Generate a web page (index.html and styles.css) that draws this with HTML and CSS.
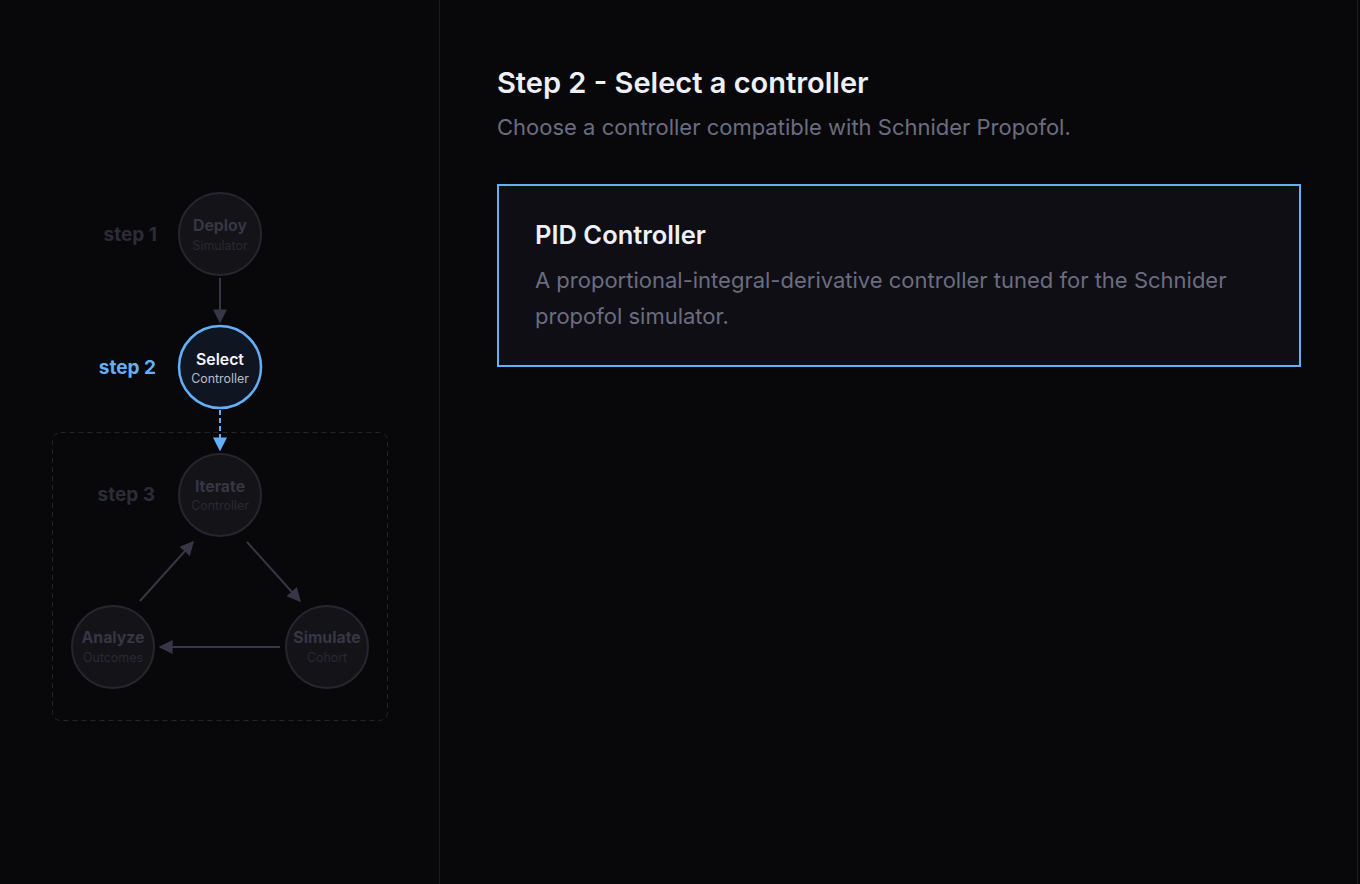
FILE: index.html
```html
<!DOCTYPE html>
<html lang="en">
<head>
    <meta charset="UTF-8">
    <title>Step 2 - Select a controller</title>
    <link rel="stylesheet" href="styles.css">
</head>
<body>
    <div class="app">
        <aside class="sidebar">
            <svg class="flow" width="440" height="884" viewBox="0 0 440 884">
                <defs>
                    <marker id="head" viewBox="0 0 10 10" refX="9" refY="5" markerWidth="7" markerHeight="7" orient="auto-start-reverse">
                        <path d="M0 0 L10 5 L0 10 z" fill="#363646"/>
                    </marker>
                    <marker id="head-blue" viewBox="0 0 10 10" refX="9" refY="5" markerWidth="7" markerHeight="7" orient="auto-start-reverse">
                        <path d="M0 0 L10 5 L0 10 z" fill="#64b0f8"/>
                    </marker>
                </defs>

                <!-- step 3 loop box -->
                <rect class="loop" x="52.5" y="432.5" width="335" height="288" rx="8"/>

                <!-- arrows -->
                <line class="edge" x1="220" y1="278" x2="220" y2="322" marker-end="url(#head)"/>
                <line class="edge edge-active" x1="220" y1="410" x2="220" y2="450" marker-end="url(#head-blue)"/>
                <line class="edge" x1="247" y1="542" x2="300" y2="601" marker-end="url(#head)"/>
                <line class="edge" x1="280" y1="647" x2="160" y2="647" marker-end="url(#head)"/>
                <line class="edge" x1="140" y1="601" x2="193" y2="542" marker-end="url(#head)"/>

                <!-- step labels -->
                <text class="step-label" x="157" y="241">step 1</text>
                <text class="step-label active" x="156" y="374">step 2</text>
                <text class="step-label" x="155" y="501">step 3</text>

                <!-- nodes -->
                <g class="node">
                    <circle cx="220" cy="234" r="41"/>
                    <text class="node-title" x="220" y="231">Deploy</text>
                    <text class="node-sub" x="220" y="250">Simulator</text>
                </g>
                <g class="node active">
                    <circle cx="220" cy="367" r="41"/>
                    <text class="node-title" x="220" y="365">Select</text>
                    <text class="node-sub" x="220" y="383">Controller</text>
                </g>
                <g class="node">
                    <circle cx="220" cy="495" r="41"/>
                    <text class="node-title" x="220" y="492">Iterate</text>
                    <text class="node-sub" x="220" y="510">Controller</text>
                </g>
                <g class="node">
                    <circle cx="113" cy="647" r="41"/>
                    <text class="node-title" x="113" y="643">Analyze</text>
                    <text class="node-sub" x="113" y="662">Outcomes</text>
                </g>
                <g class="node">
                    <circle cx="327" cy="647" r="41"/>
                    <text class="node-title" x="327" y="643">Simulate</text>
                    <text class="node-sub" x="327" y="662">Cohort</text>
                </g>
            </svg>
        </aside>

        <main class="content">
            <h1 class="title">Step 2 - Select a controller</h1>
            <p class="subtitle">Choose a controller compatible with Schnider Propofol.</p>

            <div class="option selected">
                <h2 class="option-name">PID Controller</h2>
                <p class="option-desc">A proportional-integral-derivative controller tuned for the Schnider propofol simulator.</p>
            </div>
        </main>
    </div>
</body>
</html>
```

FILE: styles.css
```css
html, body {
    margin: 0;
    height: 100%;
    background-color: #08080a;
}
body {
    font-family: 'Inter', 'Liberation Sans', sans-serif;
    color: #eef0f8;
    overflow: hidden;
}
.app {
    display: flex;
    height: 100vh;
    margin-right: 2px;
    border-right: 1px solid #1a1a20;
}
.sidebar {
    width: 439px;
    flex-shrink: 0;
    border-right: 1px solid #1a1a20;
}
.flow {
    display: block;
}
.loop {
    fill: none;
    stroke: #24242e;
    stroke-width: 1;
    stroke-dasharray: 5 4;
}
.edge {
    stroke: #363646;
    stroke-width: 2;
}
.edge-active {
    stroke: #64b0f8;
    stroke-dasharray: 5 3;
}
.step-label {
    font-size: 19px;
    font-weight: 700;
    fill: #2c2c38;
    text-anchor: end;
}
.step-label.active {
    fill: #64b0f8;
}
.node circle {
    fill: #131318;
    stroke: #262630;
    stroke-width: 2;
}
.node text {
    text-anchor: middle;
}
.node-title {
    font-size: 15.8px;
    font-weight: 700;
    fill: #363644;
}
.node-sub {
    font-size: 12.4px;
    fill: #2a2a34;
}
.node.active circle {
    fill: #0f1622;
    stroke: #64b0f8;
    stroke-width: 2.5;
}
.node.active .node-title {
    fill: #f4f6fc;
    font-weight: 600;
}
.node.active .node-sub {
    fill: #b8bdcc;
}
.content {
    flex: 1;
    padding: 64px 56px 0 57px;
}
.title {
    margin: 0;
    font-size: 29px;
    line-height: 38px;
    font-weight: 600;
    color: #eef0f8;
}
.subtitle {
    margin: 10px 0 0;
    font-size: 22px;
    line-height: 30px;
    color: #6a6d80;
}
.option {
    margin-top: 42px;
    padding: 32px 36px 31px;
    background-color: #0e0e14;
    border: 2px solid #64b0f8;
}
.option-name {
    margin: 0;
    font-size: 25.5px;
    line-height: 34px;
    font-weight: 600;
    color: #eef0f8;
}
.option-desc {
    margin: 10px 0 0;
    font-size: 22px;
    line-height: 36px;
    color: #6a6d80;
}
```
